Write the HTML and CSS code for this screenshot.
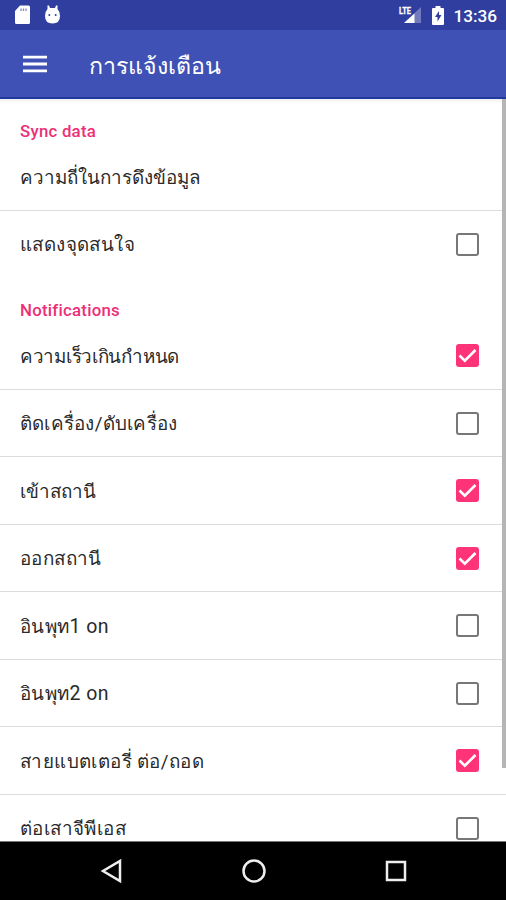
FILE: index.html
```html
<!DOCTYPE html>
<html lang="th">
<head>
<meta charset="utf-8">
<title>การแจ้งเตือน</title>
<link rel="stylesheet" href="styles.css">
</head>
<body>
<div class="screen">
  <header class="status">
    <div class="status-left">
      <svg width="17" height="20" viewBox="0 0 17 20"><path fill="#fff" d="M6 .5h8.500q1.500 0 1.500 1.500v15.500q0 1.500-1.500 1.500H2.500q-1.500 0-1.500-1.500V6z"/><path stroke="#7f88c4" stroke-width="1.300" d="M7 3.500v2.500M9.500 3.500v2.500M12 3.500v2.500"/></svg>
      <svg width="17" height="20" viewBox="0 0 17 20"><path fill="#fff" d="M3.500 4V.5h1.500L6 3h5l1-2.500h1.500V4q2.500 2.500 2.500 7 0 7.500-7.500 7.500T1 11q0-4.500 2.500-7z"/><circle cx="5.300" cy="10" r="1" fill="#303f9f"/><circle cx="11.700" cy="10" r="1" fill="#303f9f"/></svg>
    </div>
    <div class="status-right">
      <svg class="signal" width="23" height="19" viewBox="0 0 23 19"><path fill="#717bbd" d="M22 2v16H5z"/><path fill="#fff" d="M15.500 8.500V18H5z"/><text class="lte" x="0" y="9" textLength="12" lengthAdjust="spacingAndGlyphs">LTE</text></svg>
      <svg class="battery" width="12" height="19" viewBox="0 0 12 19"><path fill="#fff" d="M3.500 0h5v2H11q1 0 1 1v15q0 1-1 1H1q-1 0-1-1V3q0-1 1-1h2.500z"/><path fill="#303f9f" d="M7 5L3 11h2.500v4.500L9.500 9H7z"/></svg>
      <span class="time">13:36</span>
    </div>
  </header>
  <div class="appbar">
    <svg width="24" height="18" viewBox="0 0 24 18"><path stroke="#fff" stroke-width="2.800" d="M0 2.200h24M0 9h24M0 15.800h24"/></svg>
    <h1>การแจ้งเตือน</h1>
  </div>
  <main class="list">
    <h2>Sync data</h2>
    <div class="row"><span>ความถี่ในการดึงข้อมูล</span></div>
    <div class="row last"><span class="loose">แสดงจุดสนใจ</span><i class="box"></i></div>
    <h2 class="second">Notifications</h2>
    <div class="row"><span class="tight">ความเร็วเกินกำหนด</span><i class="box on"><svg viewBox="0 0 23 23"><path d="M3.500 11.500l5.300 5.200L19.500 6"/></svg></i></div>
    <div class="row"><span class="slight">ติดเครื่อง/ดับเครื่อง</span><i class="box"></i></div>
    <div class="row"><span>เข้าสถานี</span><i class="box on"><svg viewBox="0 0 23 23"><path d="M3.500 11.500l5.300 5.200L19.500 6"/></svg></i></div>
    <div class="row"><span class="loose">ออกสถานี</span><i class="box on"><svg viewBox="0 0 23 23"><path d="M3.500 11.500l5.300 5.200L19.500 6"/></svg></i></div>
    <div class="row"><span class="loose">อินพุท<b>1 on</b></span><i class="box"></i></div>
    <div class="row"><span class="loose">อินพุท<b>2 on</b></span><i class="box"></i></div>
    <div class="row"><span class="loose">สายแบตเตอรี่ ต่อ/ถอด</span><i class="box on"><svg viewBox="0 0 23 23"><path d="M3.500 11.500l5.300 5.200L19.500 6"/></svg></i></div>
    <div class="row"><span class="loose">ต่อเสาจีพีเอส</span><i class="box"></i></div>
    <div class="scrollbar"></div>
  </main>
  <nav class="navbar">
    <svg width="24" height="26" viewBox="0 0 24 26"><path d="M21 3v20L4 13z"/></svg>
    <svg width="26" height="26" viewBox="0 0 26 26"><circle cx="13" cy="13" r="10.500"/></svg>
    <svg width="24" height="26" viewBox="0 0 24 26"><path d="M3 4h18v18H3z"/></svg>
  </nav>
</div>
</body>
</html>
```
FILE: styles.css
```css
* { box-sizing: border-box; }
body { margin: 0; background: #fff; }
.screen {
  width: 506px;
  height: 900px;
  overflow: hidden;
  display: flex;
  flex-direction: column;
  font-family: Roboto, "Noto Sans", sans-serif;
  font-size: 18.8px;
  color: #2a2a2a;
}
.status {
  flex: none;
  height: 30px;
  background: #303f9f;
  display: flex;
  justify-content: space-between;
  padding: 5px 9px 0 14px;
  color: #fff;
}
.status-left { display: flex; gap: 13px; }
.status-right { display: flex; align-items: flex-start; }
.signal { overflow: visible; }
.lte { font: 700 9.5px Roboto, sans-serif; fill: #fff; stroke: #fff; stroke-width: 0.3; }
.battery { margin: 1px 9px 0 10px; }
.time { font-size: 17.2px; font-weight: 500; line-height: 22px; }
.appbar {
  flex: none;
  height: 69px;
  background: #3f51b5;
  border-bottom: 2px solid #2339a0;
  color: #fff;
  display: flex;
  align-items: center;
  gap: 42px;
  padding: 0 0 0 23px;
}
h1 { margin: 3px 0 0; font-size: 23.2px; font-weight: 400; }
.list {
  position: relative;
  flex: 1;
  min-height: 0;
  overflow: hidden;
  background: linear-gradient(#eee, #fff 4px);
}
h2 {
  height: 44.25px;
  margin: 0;
  padding: 21px 20px 0;
  font-size: 16.8px;
  line-height: 22px;
  font-weight: 500;
  letter-spacing: 0.25px;
  color: #ec2f78;
}
.second { height: 44px; }
.row {
  height: 67.5px;
  display: flex;
  align-items: center;
  justify-content: space-between;
  padding: 0 27px 0 20px;
  border-bottom: 1px solid #dcdcdc;
}
.last { border-bottom-color: transparent; }
.tight { letter-spacing: -0.28px; }
.slight { letter-spacing: 0.24px; }
.loose { letter-spacing: 0.4px; }
.row b { font-weight: 400; font-size: 19.5px; }
.box {
  width: 23px;
  height: 23px;
  border: 2px solid #777;
  border-radius: 3px;
}
.on { border: 0; background: #ff3378; }
.on svg { display: block; fill: none; stroke: #fff; stroke-width: 2.6; }
.scrollbar {
  position: absolute;
  top: 0;
  right: 0;
  width: 4px;
  height: 669px;
  background: #b5b5b5;
}
.navbar {
  flex: none;
  height: 59px;
  border-top: 1px solid #777;
  background: #000;
  display: flex;
  align-items: center;
  justify-content: space-between;
  padding: 0 98px 0 99px;
}
.navbar svg { fill: none; stroke: #eee; stroke-width: 2.5; }
```
